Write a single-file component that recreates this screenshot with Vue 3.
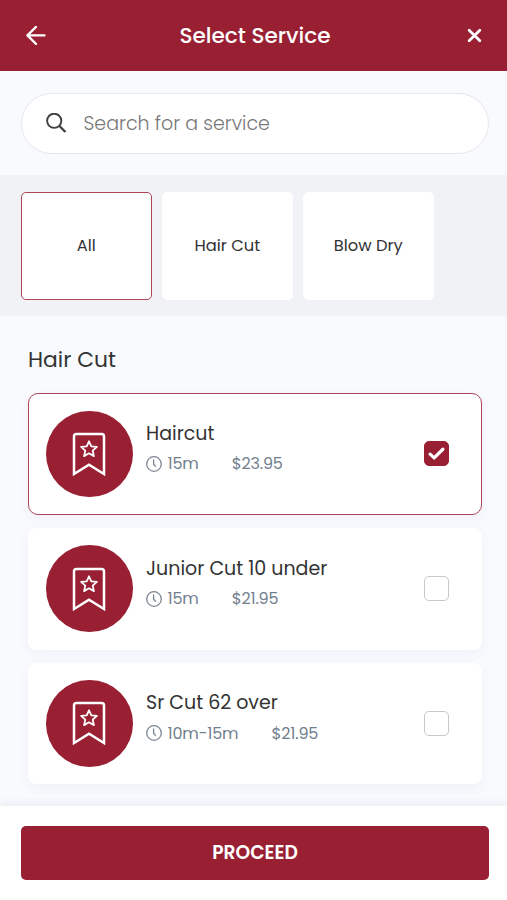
<script setup>
import { ref } from 'vue'

const categories = ['All', 'Hair Cut', 'Blow Dry']
const activeCategory = ref('All')
const query = ref('')

const services = ref([
  { id: 'haircut', name: 'Haircut', duration: '15m', price: '$23.95', selected: true },
  { id: 'junior', name: 'Junior Cut 10 under', duration: '15m', price: '$21.95', selected: false },
  { id: 'senior', name: 'Sr Cut 62 over', duration: '10m-15m', price: '$21.95', selected: false },
])
</script>

<template>
  <div class="screen">
    <header class="topbar">
      <button class="icon-btn" aria-label="Back">
        <svg class="back" viewBox="0 0 20 20" fill="none" stroke="#fff" stroke-width="2.2" stroke-linecap="round" stroke-linejoin="round">
          <path d="M18.6 10.4H1.4M10 1.9 1.4 10.4l8.6 8.5" />
        </svg>
      </button>
      <h1 class="title">Select Service</h1>
      <button class="icon-btn" aria-label="Close">
        <svg class="close" viewBox="0 0 14 14" fill="none" stroke="#fff" stroke-width="2.6" stroke-linecap="round">
          <path d="m2 2 10 10M12 2 2 12" />
        </svg>
      </button>
    </header>

    <div class="search-wrap">
      <label class="search">
        <svg class="search-icon" viewBox="0 0 20 20" fill="none" stroke="#414141" stroke-width="1.9">
          <circle cx="8.2" cy="7.8" r="7.1" />
          <path d="m13.2 12.8 6.1 6.1" stroke-width="2.2" />
        </svg>
        <input v-model="query" class="search-input" type="text" placeholder="Search for a service" />
      </label>
    </div>

    <nav class="categories">
      <button
        v-for="category in categories"
        :key="category"
        class="category"
        :class="{ active: category === activeCategory }"
        @click="activeCategory = category"
      >{{ category }}</button>
    </nav>

    <main class="list">
      <h2 class="group-title">Hair Cut</h2>
      <article
        v-for="service in services"
        :key="service.id"
        class="card"
        :class="{ selected: service.selected }"
        @click="service.selected = !service.selected"
      >
        <div class="avatar">
          <svg class="bookmark" viewBox="0 0 34 44" fill="none" stroke="#fff" stroke-width="2.5">
            <path d="M2 42V4.5C2 2.8 3 2 4.5 2h25C31 2 32 2.8 32 4.5V42L17 32.8Z" />
            <path d="m17 9.3 2.3 5 5.6.6-4.2 3.7 1.2 5.5-4.9-2.8-4.9 2.8 1.2-5.5-4.2-3.7 5.6-.6Z" stroke-width="1.8" stroke-linejoin="round" />
          </svg>
        </div>
        <div class="info">
          <h3 class="name">{{ service.name }}</h3>
          <div class="meta">
            <svg class="clock" viewBox="0 0 16 16" fill="none" stroke="#7b8794" stroke-width="1.3" stroke-linecap="round">
              <circle cx="8" cy="8" r="7.3" />
              <path d="M7.6 4v4.2l1.8 2" />
            </svg>
            <span class="duration">{{ service.duration }}</span>
            <span class="price">{{ service.price }}</span>
          </div>
        </div>
        <span class="checkbox">
          <svg v-if="service.selected" class="tick" viewBox="0 0 16 12" fill="none" stroke="#fff" stroke-width="3" stroke-linecap="round" stroke-linejoin="round">
            <path d="m2 6.6 3.8 3.6L14 2" />
          </svg>
        </span>
      </article>
    </main>

    <footer class="footer">
      <button class="proceed">PROCEED</button>
    </footer>
  </div>
</template>

<style>
body {
  margin: 0;
}
</style>

<style scoped>
.screen {
  box-sizing: border-box;
  display: flex;
  flex-direction: column;
  width: 507px;
  height: 900px;
  overflow: hidden;
  background: #f8fafe;
  color: #333;
  font-family: Poppins, Inter, 'Liberation Sans', sans-serif;
}

.screen * {
  box-sizing: border-box;
}

button {
  padding: 0;
  border: 0;
  font: inherit;
  color: inherit;
}

h1,
h2,
h3 {
  margin: 0;
  font-weight: 400;
}

svg {
  display: block;
}

.topbar {
  flex: none;
  display: flex;
  align-items: center;
  justify-content: space-between;
  height: 70.5px;
  padding: 0 25px 0 26px;
  background: #991f33;
}

.icon-btn {
  background: none;
}

.back {
  width: 20px;
  height: 20px;
}

.title {
  position: relative;
  top: 1px;
  left: -1.5px;
  color: #fff;
  font-size: 21.6px;
  font-weight: 500;
  line-height: 32px;
}

.close {
  width: 15px;
  height: 15px;
}

.search-wrap {
  flex: none;
  height: 104.5px;
  padding: 22px 18px 0 21px;
}

.search {
  display: flex;
  align-items: center;
  gap: 18px;
  height: 61px;
  padding: 0 23.5px;
  border: 1.5px solid #e5e7ed;
  border-radius: 31px;
  background: #fff;
}

.search-icon {
  flex: none;
  width: 20px;
  height: 20px;
}

.search-input {
  flex: 1;
  min-width: 0;
  padding: 1px 0 0;
  border: 0;
  outline: 0;
  background: none;
  font: 300 19px/28px Poppins, Inter, 'Liberation Sans', sans-serif;
  color: #3b3b3b;
}

.search-input::placeholder {
  color: #777;
  opacity: 1;
}

.categories {
  flex: none;
  display: flex;
  gap: 10.5px;
  height: 141px;
  padding: 17px 0 16px 21px;
  background: #f0f2f6;
}

.category {
  width: 130.5px;
  height: 108px;
  padding-bottom: 1px;
  border: 1px solid #fff;
  border-radius: 5px;
  background: #fff;
  font-size: 16.3px;
  font-weight: 400;
}

.category.active {
  border: 1.5px solid #ac4558;
}

.list {
  flex: 1;
  min-height: 0;
  display: flex;
  flex-direction: column;
  gap: 13px;
  padding: 28px 25px 0 28px;
}

.group-title {
  flex: none;
  height: 36px;
  font-size: 21.8px;
  line-height: 32px;
}

.card {
  flex: none;
  display: flex;
  align-items: center;
  height: 121.8px;
  padding: 0 33px 0 18px;
  border-radius: 8px;
  background: #fff;
  box-shadow: 0 4px 12px rgba(70, 80, 110, 0.05);
}

.card.selected {
  border: 1.5px solid #ac4558;
  border-radius: 10px;
  padding: 0 32px 0 17px;
}

.avatar {
  flex: none;
  display: flex;
  align-items: center;
  justify-content: center;
  width: 86.5px;
  height: 86.5px;
  border-radius: 50%;
  background: #991f33;
}

.bookmark {
  width: 34px;
  height: 44px;
}

.info {
  flex: 1;
  display: flex;
  flex-direction: column;
  gap: 2px;
  height: 80px;
  margin-left: 13.5px;
  padding-top: 5px;
}

.name {
  font-size: 19px;
  line-height: 30px;
  white-space: nowrap;
}

.meta {
  display: flex;
  align-items: center;
  height: 26px;
  color: #72808e;
  font-size: 16px;
  letter-spacing: -0.17px;
}

.clock {
  width: 16px;
  height: 16px;
  margin-right: 5.5px;
}

.price {
  margin-left: 33px;
}

.checkbox {
  flex: none;
  display: flex;
  align-items: center;
  justify-content: center;
  width: 25px;
  height: 25px;
  border: 1.5px solid #c6c8cf;
  border-radius: 5px;
  background: #fff;
}

.selected .checkbox {
  border-color: #991f33;
  background: #991f33;
}

.tick {
  flex: none;
  width: 17px;
  height: 13px;
}

.footer {
  flex: none;
  z-index: 1;
  height: 94.5px;
  padding: 20.5px 18px 0 21px;
  background: #fff;
  box-shadow: 0 -3px 8px rgba(30, 40, 60, 0.06);
}

.proceed {
  width: 100%;
  height: 54px;
  padding-bottom: 2px;
  border-radius: 5px;
  background: #991f33;
  color: #fff;
  font-size: 18.7px;
  font-weight: 600;
}
</style>
